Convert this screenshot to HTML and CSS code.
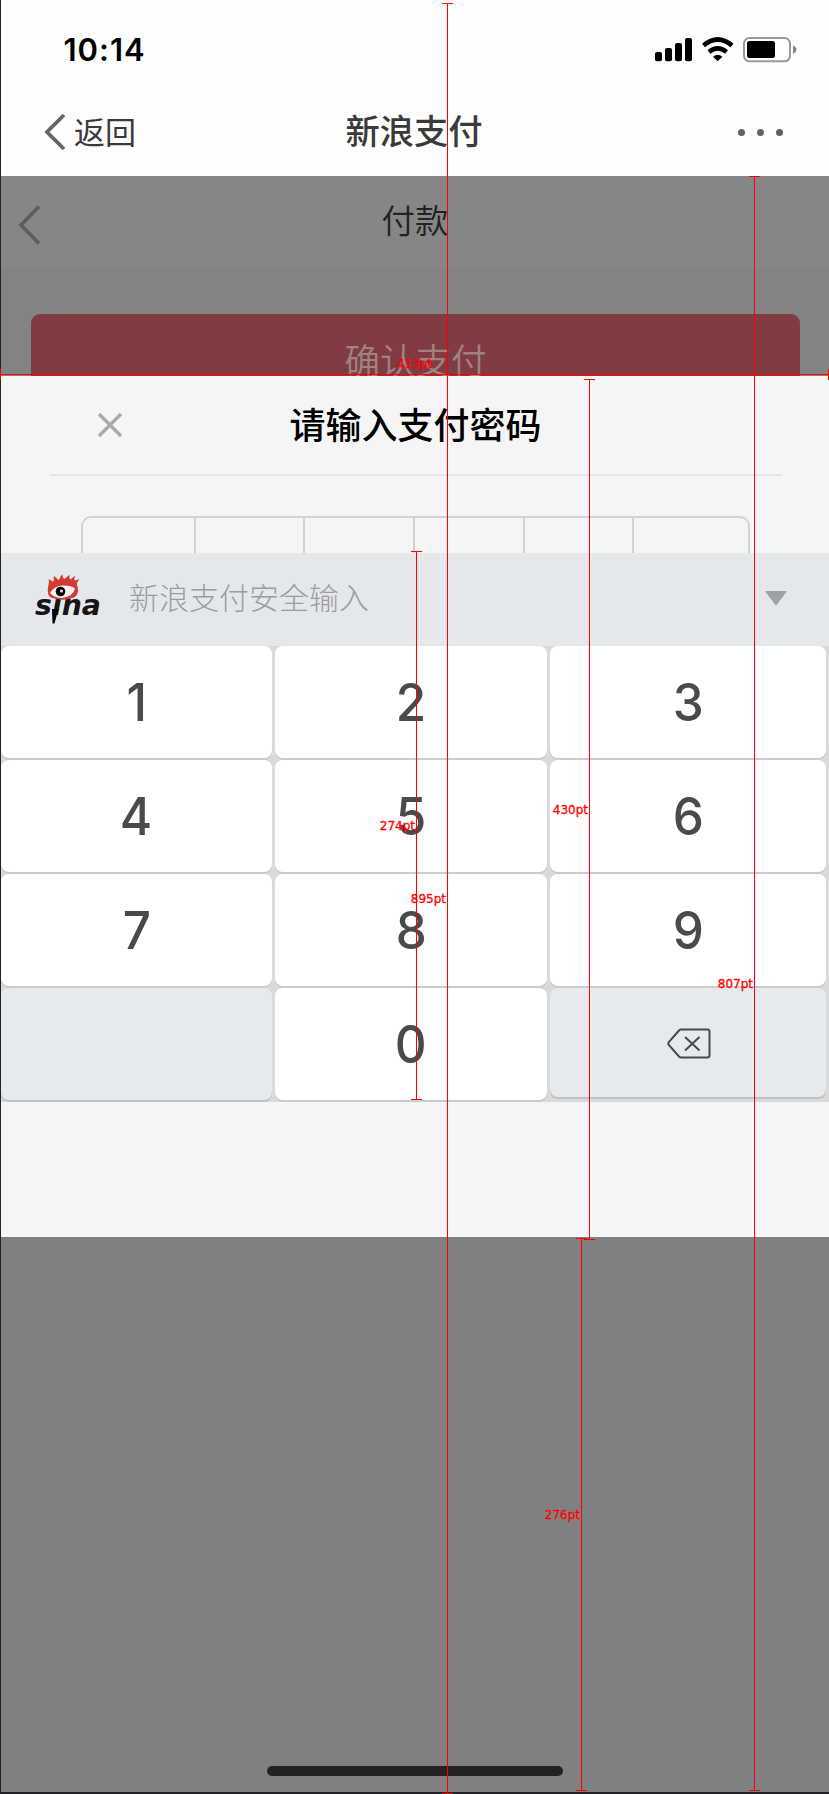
FILE: index.html
```html
<!DOCTYPE html>
<html lang="zh-CN">
<head>
<meta charset="utf-8">
<title>新浪支付</title>
<link rel="stylesheet" href="styles.css">
</head>
<body>
<div class="screen">
  <header class="top">
    <div class="status">
      <span class="time">10:14</span>
      <svg class="status-icons" width="142" height="26" viewBox="654 37 142 26">
        <rect x="654" y="52" width="7" height="9.3" rx="2"/>
        <rect x="664" y="48" width="7" height="13.3" rx="2"/>
        <rect x="674" y="43" width="7" height="18.3" rx="2"/>
        <rect x="684" y="38" width="7" height="23.3" rx="2"/>
        <g fill="none" stroke="#000" stroke-width="4.6">
          <path d="M702.5 45.5Q716.7 33.5 731 45.5"/>
          <path d="M708 52Q716.7 44.8 725.500 52"/>
        </g>
        <path d="M712 56.700Q716.700 52.800 721.400 56.700L716.700 61.300Z"/>
        <rect x="743" y="38" width="46" height="23.300" rx="5.500" fill="#fff" stroke="#999" stroke-width="2"/>
        <rect x="746" y="41" width="28" height="17" rx="2.500"/>
        <path d="M792 45.500Q795.500 47 795.500 49.700Q795.500 52 792 54Z" fill="#888"/>
      </svg>
    </div>
    <nav class="nav">
      <div class="back">
        <svg width="22" height="38" viewBox="0 0 22 38"><path d="M20 2L3 19L20 36" fill="none" stroke="#666" stroke-width="3.800"/></svg>
        <span>返回</span>
      </div>
      <h1 class="nav-title">新浪支付</h1>
      <div class="more"><i></i><i></i><i></i></div>
    </nav>
  </header>

  <section class="page">
    <div class="page-head">
      <svg width="24" height="42" viewBox="0 0 24 42"><path d="M21 2.500L3 21L21 39.500" fill="none" stroke="#5c5c5c" stroke-width="3.500"/></svg>
      <h2>付款</h2>
      <span></span>
    </div>
    <div class="pay">确认支付</div>
  </section>

  <section class="sheet">
    <div class="sheet-head">
      <svg width="26" height="26" viewBox="0 0 26 26"><path d="M2 2L24 24M24 2L2 24" stroke="#aaa" stroke-width="3.400" fill="none"/></svg>
      <h2>请输入支付密码</h2>
      <span></span>
    </div>
    <div class="code-area">
      <div class="code"><i></i><i></i><i></i><i></i><i></i><i></i></div>
    </div>
    <div class="keyboard">
      <div class="kb-head">
        <svg class="sina" width="68" height="52" viewBox="33 574 68 52">
          <text x="34" y="615" textLength="66" lengthAdjust="spacingAndGlyphs">sina</text>
          <path d="M51 609L57.500 609L53.500 623.500L51.500 623.500Z"/>
          <path d="M47 592C46 587 49 584 47.500 579.500Q51 580 51.500 582C54 580 52 578 53 576Q56 578 57 580C60 579 58 577 61.500 574.500Q61.500 577 63 579C66 578 65.500 576 69 575Q67.500 577.500 69 579.500C71 579 71 577 74.500 576Q72.500 578.500 74 580.500C75.500 580.500 76 579 78.500 579.500Q75.500 582 76 585C78 590 77 595 73 597.500Q62 602 50 597.500Q47 596 47 592Z" fill="#d23a33"/>
          <path d="M49 593Q53 586 61 585.500Q70 585 74 588.500Q72 596.500 61.500 598Q53 598 49 593Z" fill="#f4f4f4"/>
          <circle cx="59.500" cy="591.500" r="4.800"/>
          <circle cx="60.500" cy="591" r="1.600" fill="#ddd"/>
        </svg>
        <span>新浪支付安全输入</span>
        <svg class="fold" width="24" height="17" viewBox="0 0 24 17"><path d="M2.500 1H21.500Q23 1 22 2.500L13 14.500Q12 16 11 14.500L2 2.500Q1 1 2.500 1Z" fill="#9ea1a9"/></svg>
      </div>
      <div class="keys">
        <b><span>1</span></b><b><span>2</span></b><b><span>3</span></b>
        <b><span>4</span></b><b><span>5</span></b><b><span>6</span></b>
        <b><span>7</span></b><b><span>8</span></b><b><span>9</span></b>
        <b class="blank"></b><b><span>0</span></b>
        <b class="del"><svg width="44" height="31" viewBox="0 0 44 31" fill="none" stroke="#48494b" stroke-width="2"><path d="M14 1.500H40.500Q42.500 1.500 42.500 3.500V27.500Q42.500 29.500 40.500 29.500H14Q13 29.500 12 28.500L1.800 17Q.8 15.500 1.800 14L12 2.500Q13 1.500 14 1.500Z"/><path d="M18 9L32.500 22.500M32.500 9L18 22.500"/></svg></b>
      </div>
    </div>
  </section>

  <footer class="bottom"><div class="home"></div></footer>

  <div class="measure v m895"><span>895pt</span></div>
  <div class="measure v m807"><span>807pt</span></div>
  <div class="measure v m430"><span>430pt</span></div>
  <div class="measure v m274"><span>274pt</span></div>
  <div class="measure v m276"><span>276pt</span></div>
  <div class="measure h m413"><span>413pt</span></div>
</div>
</body>
</html>
```
FILE: styles.css
```css
* { box-sizing: border-box; margin: 0; padding: 0; }
body {
  width: 829px;
  height: 1794px;
  overflow: hidden;
  font-family: "Noto Sans CJK SC", sans-serif;
}
svg { display: block; flex: none; }
h1, h2 { white-space: nowrap; }
.screen {
  position: relative;
  display: flex;
  flex-direction: column;
  height: 1794px;
  border-left: 1px solid #222228;
  border-bottom: 2px solid #222228;
  background: #808080;
}

/* status and navigation bars */
.top { height: 176px; background: #fdfdfd; }
.status {
  display: flex;
  justify-content: space-between;
  align-items: center;
  height: 100px;
  padding: 0 32px 0 62.5px;
}
.time { font: 600 31px/40px Inter, sans-serif; letter-spacing: 1px; }
.nav {
  display: grid;
  grid-template-columns: 1fr auto 1fr;
  align-items: center;
  height: 64px;
  padding: 0 46px 0 43px;
}
.back { display: flex; align-items: center; gap: 8px; font-size: 31px; line-height: 40px; color: #3a3a3a; }
.back span { padding-bottom: 2px; }
.nav-title { padding: 0 0 6px 1px; font-size: 34.300px; font-weight: 500; line-height: 40px; color: #3a3a3a; }
.more { display: flex; justify-content: flex-end; gap: 12px; }
.more i { width: 7px; height: 7px; border-radius: 50%; background: #626262; }

/* dimmed payment page */
.page { height: 200px; background: linear-gradient(#868686 88px, #838384 96px); overflow: hidden; }
.page-head {
  display: grid;
  grid-template-columns: 1fr auto 1fr;
  align-items: center;
  height: 98px;
  padding: 0 17px;
}
.page-head h2 { font-size: 33.500px; font-weight: 350; line-height: 40px; color: #222; padding-bottom: 13px; }
.pay {
  height: 90px;
  margin: 40px 29px 0 30px;
  border-radius: 9px;
  background: #823b43;
  color: #9c8481;
  font-size: 35.500px;
  font-weight: 350;
  line-height: 90px;
  text-align: center;
}

/* password sheet */
.sheet { height: 861px; background: #f5f5f5; }
.sheet-head {
  display: grid;
  grid-template-columns: 1fr auto 1fr;
  align-items: center;
  height: 100px;
  margin: 0 47px 0 49px;
  padding: 0 48px 0 47px;
  border-bottom: 2px solid #e5e5e5;
}
.sheet-head h2 { padding-bottom: 4px; font-size: 36px; font-weight: 500; line-height: 44px; color: #000; }
.code-area { height: 77px; padding: 40px 79px 0 80px; overflow: hidden; }
.code {
  display: grid;
  grid-template-columns: 111px 109px 110px 110px 109px 1fr;
  height: 60px;
  border: 2px solid #d2d2d2;
  border-radius: 10px;
}
.code i + i { border-left: 2px solid #d2d2d2; }

/* numeric keyboard */
.keyboard { height: 549px; background: #d8dadc; }
.kb-head {
  display: flex;
  align-items: center;
  height: 93px;
  padding: 0 41px 0 33px;
  background: #e5e8eb;
}
.kb-head span {
  flex: 1;
  padding: 0 0 7px 27px;
  font-size: 30px;
  font-weight: 300;
  line-height: 40px;
  color: #9a9da0;
}
.fold { margin-bottom: 2px; }
.sina text { font: italic bold 29px "DejaVu Sans", sans-serif; fill: #151515; }
.keys {
  display: grid;
  grid-template-columns: 271px 272px 276px;
  grid-template-rows: repeat(4, 112px);
  gap: 2px 3px;
}
.keys b {
  display: flex;
  align-items: center;
  justify-content: center;
  border-radius: 8px;
  background: #fff;
  box-shadow: 0 2px #cbcbcb;
  color: #4a4a4a;
  font: 500 52px/60px Inter, sans-serif;
}
.keys b span { padding-top: 2px; transform: scaleX(0.95); }
.keys .blank { background: #e7eaed; box-shadow: 0 2px #bcc3ca; }
.keys .del { height: 109px; padding: 2px 0 0 2px; background: #e7eaed; box-shadow: 0 2px #bec2c6; }

/* bottom area */
.bottom { flex: 1; display: flex; justify-content: center; align-items: flex-end; padding-bottom: 16px; }
.home { width: 296px; height: 10px; border-radius: 5px; background: #222; }

/* measurement guides laid over the screen */
.measure { position: absolute; color: #f00; }
.measure::before { content: ""; position: absolute; background: #f00; }
.measure span { position: absolute; font: 12px/14px "DejaVu Sans", sans-serif; -webkit-text-stroke: 0.3px #f00; }
.v { width: 11px; border: solid #f00; border-width: 1px 0; }
.v::before { left: 5px; top: 0; bottom: 0; width: 1px; }
.v span { right: 7px; top: 50%; transform: translateY(-50%); }
.m895 { left: 441px; top: 3px; height: 1791px; }
.m807 { left: 748px; top: 176px; height: 1615px; }
.m430 { left: 583px; top: 379px; height: 861px; }
.m274 { left: 410px; top: 551px; height: 549px; }
.m276 { left: 575px; top: 1238px; height: 553px; }
.h { left: -1px; top: 369px; width: 829px; height: 11px; border: solid #f00; border-width: 0 1px; }
.h::before { left: 0; right: 0; top: 5px; height: 1px; }
.h span { left: 396px; top: -12px; }
```
